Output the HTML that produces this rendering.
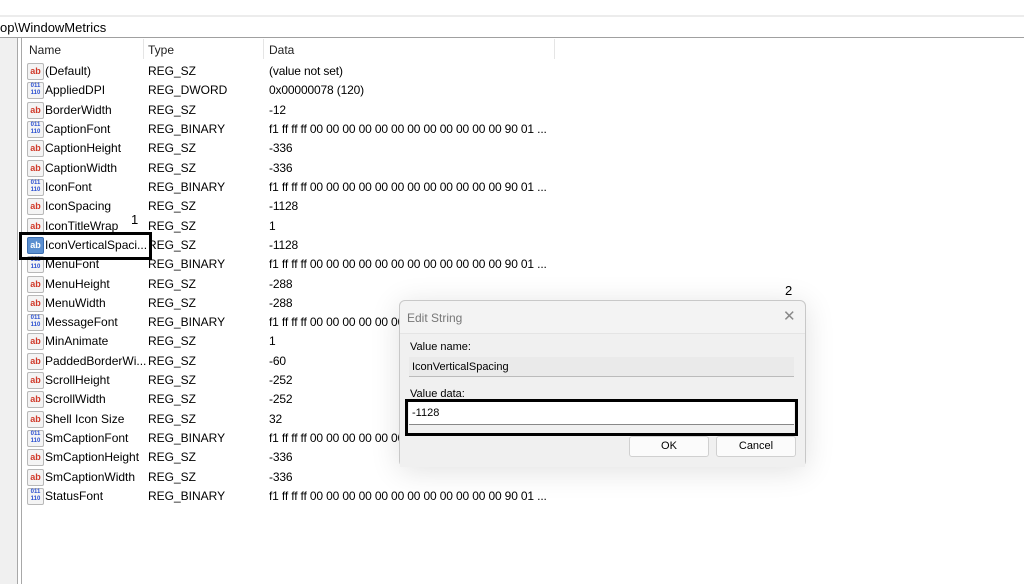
<!DOCTYPE html>
<html><head><style>
body{margin:0;width:1024px;height:584px;overflow:hidden;background:#fff;font-family:"Liberation Sans",sans-serif;font-size:12px;color:#000;position:relative}
.a{position:absolute}
.row{position:absolute;left:27px;height:19px;width:560px}
.row span{position:absolute;top:0;white-space:nowrap}
.ic{position:absolute;left:0;top:-1px;width:15px;height:15px;border:1px solid #b8b8b8;border-radius:2px;background:#f4f4f4;font-size:9px;font-weight:bold;line-height:14px;text-align:center}
.ab{color:#d03a2a}
.bn{color:#2a4fd0;font-size:6px;line-height:7px}
</style></head><body>
<div class="a" style="left:0;top:15px;width:1024px;height:2px;background:#ececec"></div>
<div class="a" style="left:0;top:20px;font-size:13px">op\WindowMetrics</div>
<div class="a" style="left:0;top:37px;width:1024px;height:1px;background:#a0a0a0"></div>
<div class="a" style="left:0;top:38px;width:17px;height:546px;background:#f0f0f0"></div>
<div class="a" style="left:17px;top:38px;width:1px;height:546px;background:#a8a8a8"></div>
<div class="a" style="left:21px;top:38px;width:1px;height:546px;background:#a8a8a8"></div>
<div class="a" style="left:29px;top:43px;color:#222">Name</div>
<div class="a" style="left:148px;top:43px;color:#222">Type</div>
<div class="a" style="left:269px;top:43px;color:#222">Data</div>
<div class="a" style="left:143px;top:39px;width:1px;height:20px;background:#e5e5e5"></div>
<div class="a" style="left:263px;top:39px;width:1px;height:20px;background:#e5e5e5"></div>
<div class="a" style="left:554px;top:39px;width:1px;height:20px;background:#e5e5e5"></div>
<div id="rows"></div>
<div class="a" style="left:131px;top:212px;font-size:13px">1</div>
<div class="a" style="left:19px;top:232px;width:127px;height:22px;border:3px solid #000"></div>
<div class="a" style="left:785px;top:283px;font-size:13px">2</div>
<div class="a" style="left:399px;top:300px;width:405px;height:165px;background:#f3f3f3;border:1px solid #c8c8c8;border-radius:6px;box-shadow:0 4px 30px rgba(0,0,0,.12)">
<div class="a" style="left:7px;top:10px;color:#777">Edit String</div>
<div class="a" style="left:383px;top:6px;color:#888;font-size:15px">✕</div>
<div class="a" style="left:0;top:32px;width:405px;height:133px;background:#f0f0f0;border-top:1px solid #e4e4e4"></div>
<div class="a" style="left:10px;top:40px;font-size:11px">Value name:</div>
<div class="a" style="left:9px;top:56px;width:385px;height:20px;background:#eaeaea;border-bottom:1px solid #bbb;font-size:11px;line-height:20px;padding-left:3px;box-sizing:border-box">IconVerticalSpacing</div>
<div class="a" style="left:10px;top:87px;font-size:11px">Value data:</div>
<div class="a" style="left:9px;top:100px;width:385px;height:24px;background:#fff;border-bottom:1px solid #888;font-size:11px;line-height:24px;padding-left:3px;box-sizing:border-box">-1128</div>
<div class="a" style="left:229px;top:135px;width:78px;height:19px;background:#fbfbfb;border:1px solid #d0d0d0;border-radius:3px;text-align:center;line-height:19px;font-size:11px">OK</div>
<div class="a" style="left:316px;top:135px;width:78px;height:19px;background:#fbfbfb;border:1px solid #d0d0d0;border-radius:3px;text-align:center;line-height:19px;font-size:11px">Cancel</div>
</div>
<div class="a" style="left:405px;top:399px;width:387px;height:31px;border:3px solid #000"></div>
<script>
var d=[["ab","(Default)","REG_SZ","(value not set)"],["bn","AppliedDPI","REG_DWORD","0x00000078 (120)"],["ab","BorderWidth","REG_SZ","-12"],["bn","CaptionFont","REG_BINARY","B"],["ab","CaptionHeight","REG_SZ","-336"],["ab","CaptionWidth","REG_SZ","-336"],["bn","IconFont","REG_BINARY","B"],["ab","IconSpacing","REG_SZ","-1128"],["ab","IconTitleWrap","REG_SZ","1"],["ab","IconVerticalSpaci...","REG_SZ","-1128"],["bn","MenuFont","REG_BINARY","B"],["ab","MenuHeight","REG_SZ","-288"],["ab","MenuWidth","REG_SZ","-288"],["bn","MessageFont","REG_BINARY","B"],["ab","MinAnimate","REG_SZ","1"],["ab","PaddedBorderWi...","REG_SZ","-60"],["ab","ScrollHeight","REG_SZ","-252"],["ab","ScrollWidth","REG_SZ","-252"],["ab","Shell Icon Size","REG_SZ","32"],["bn","SmCaptionFont","REG_BINARY","B"],["ab","SmCaptionHeight","REG_SZ","-336"],["ab","SmCaptionWidth","REG_SZ","-336"],["bn","StatusFont","REG_BINARY","B"]];
var h="";d.forEach(function(r,i){var t=Math.round(64+i*19.32);var v=r[3]=="B"?"f1 ff ff ff 00 00 00 00 00 00 00 00 00 00 00 00 90 01 ...":r[3];
var ic=r[0]=="ab"?'<div class="ic ab"'+(i==9?' style="background:#5b8fd0;color:#fff;border-color:#3a6db0"':'')+'>ab</div>':'<div class="ic bn">011<br>110</div>';
h+='<div class="row" style="top:'+t+'px">'+ic+'<span style="left:18px">'+r[1]+'</span><span style="left:121px">'+r[2]+'</span><span style="left:242px;letter-spacing:-0.15px">'+v+'</span></div>';});
document.getElementById("rows").innerHTML=h;
</script>
</body></html>
